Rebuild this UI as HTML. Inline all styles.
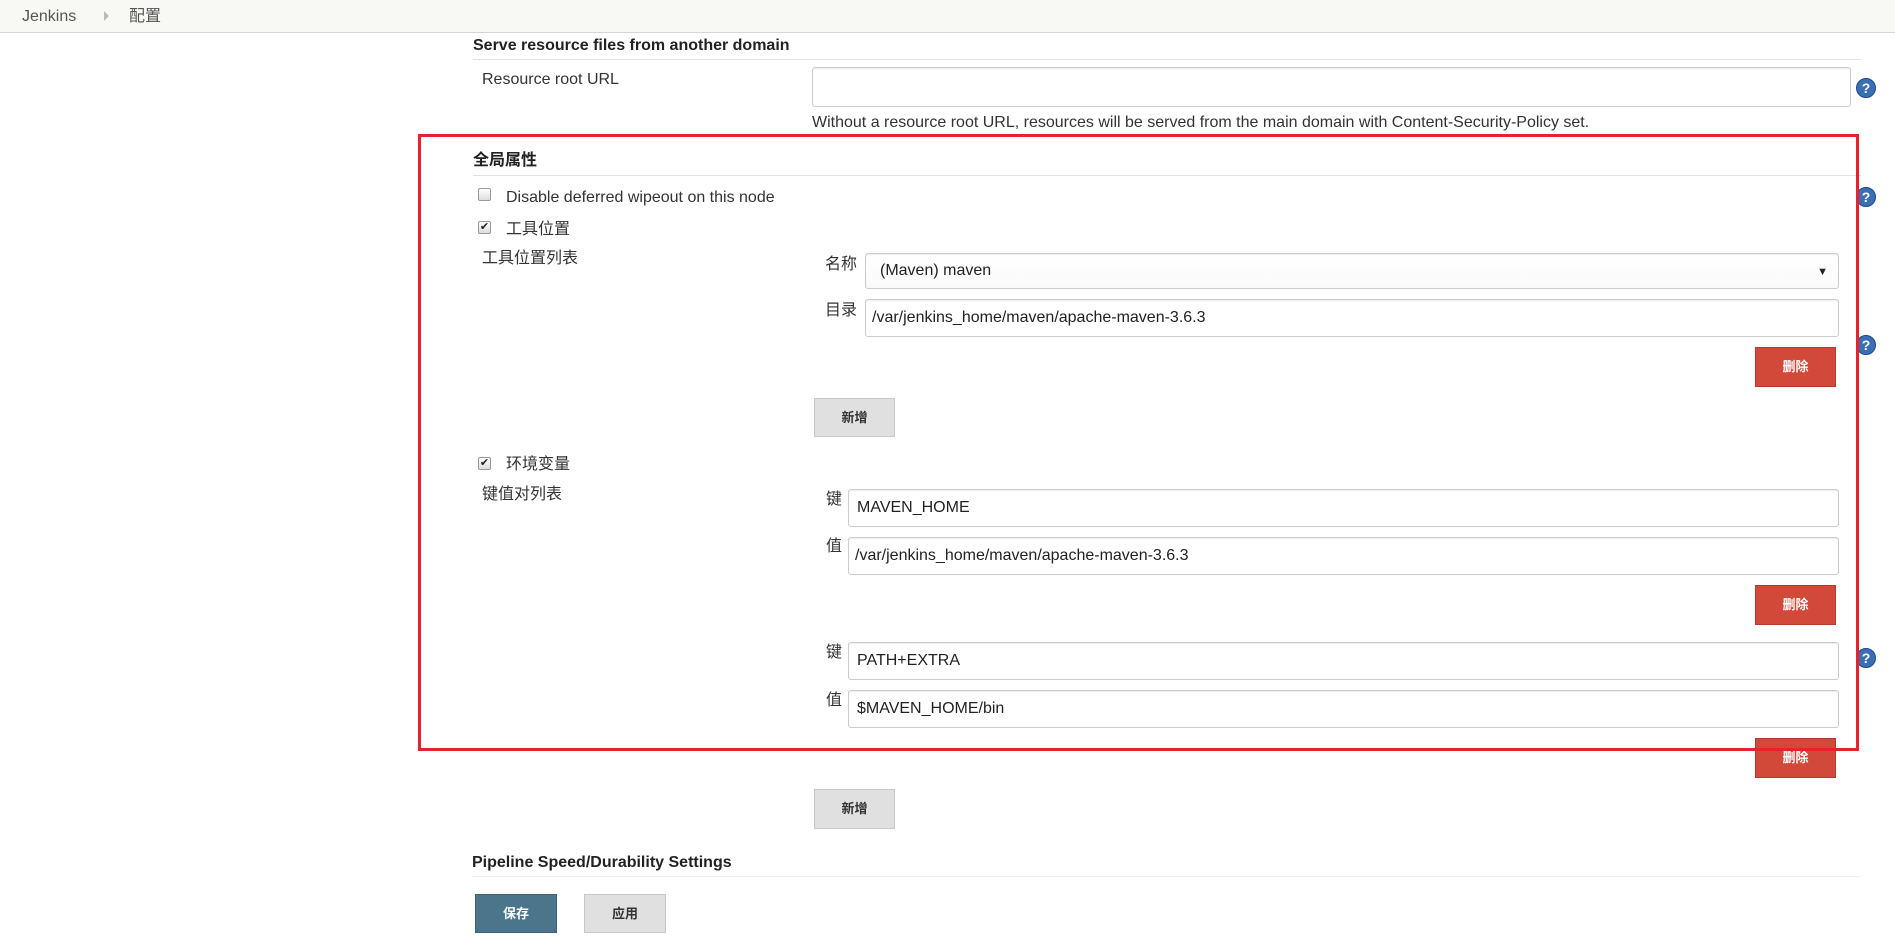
<!DOCTYPE html>
<html><head><meta charset="utf-8"><style>
*{box-sizing:border-box}
body{margin:0;width:1895px;height:941px;overflow:hidden;background:#fff;font-family:"Liberation Sans","Noto Sans CJK SC",sans-serif;font-size:16px;line-height:20px;color:#333;position:relative}
.a{position:absolute;white-space:nowrap}
.bar{left:0;top:0;width:1895px;height:33px;background:#f8f9f4;border-bottom:1px solid #d6d6d6}
.h{font-weight:bold;color:#222;font-size:16px}
.line{height:1px;background:#e2e2e2}
.inp{background:#fff;border:1px solid #ccc;border-radius:3px;box-shadow:inset 0 1px 1px rgba(0,0,0,.08);padding-left:8px;display:flex;align-items:center;color:#222;font-size:16px}
.help{width:20px;height:20px;border-radius:50%;background:#3a6fb4;border:1px solid #1d4b87;color:#fff;font-weight:bold;font-size:14px;text-align:center;line-height:18px}
.cb{width:13px;height:13px;border:1px solid #999;border-radius:2px;background:linear-gradient(#fff,#ddd);font-size:11px;line-height:11px;text-align:center;color:#222}
.del{background:#d24939;border:1px solid #b33a2c;color:#fff;font-weight:bold;font-size:13px;display:flex;align-items:center;justify-content:center;width:81px;height:40px}
.add{background:#e0e0e0;border:1px solid #c8c8c8;color:#333;font-weight:bold;font-size:13px;display:flex;align-items:center;justify-content:center;width:81px;height:39px}
.lbl{font-size:16px;color:#333}
</style></head><body>
<div class="a bar"></div>
<div class="a" style="left:22px;top:7px;color:#555">Jenkins</div>
<div class="a" style="left:104px;top:11px;width:0;height:0;border-left:5px solid #bbb;border-top:5px solid transparent;border-bottom:5px solid transparent"></div>
<div class="a" style="left:129px;top:7px;color:#555">配置</div>

<div class="a h" style="left:473px;top:36px">Serve resource files from another domain</div>
<div class="a line" style="left:473px;top:59px;width:1388px"></div>
<div class="a lbl" style="left:482px;top:70px">Resource root URL</div>
<div class="a inp" style="left:812px;top:67px;width:1039px;height:40px"></div>
<div class="a help" style="left:1856px;top:78px">?</div>
<div class="a lbl" style="left:812px;top:113px;color:#333">Without a resource root URL, resources will be served from the main domain with Content-Security-Policy set.</div>

<div class="a h" style="left:473px;top:151px">全局属性</div>
<div class="a line" style="left:473px;top:175px;width:1388px"></div>
<div class="a cb" style="left:478px;top:188px"></div>
<div class="a lbl" style="left:506px;top:188px">Disable deferred wipeout on this node</div>
<div class="a help" style="left:1856px;top:187px">?</div>
<div class="a cb" style="left:478px;top:221px">✔</div>
<div class="a lbl" style="left:506px;top:220px">工具位置</div>
<div class="a lbl" style="left:482px;top:249px">工具位置列表</div>

<div class="a lbl" style="left:825px;top:255px">名称</div>
<div class="a inp" style="left:865px;top:253px;width:974px;height:36px;padding-left:14px;background:linear-gradient(#fff,#fafafa)">(Maven) maven<span style="position:absolute;right:10px;top:8px;font-size:11px">▼</span></div>
<div class="a lbl" style="left:825px;top:301px">目录</div>
<div class="a inp" style="left:865px;top:299px;width:974px;height:38px;padding-left:6px">/var/jenkins_home/maven/apache-maven-3.6.3</div>
<div class="a help" style="left:1856px;top:335px">?</div>
<div class="a del" style="left:1755px;top:347px">删除</div>
<div class="a add" style="left:814px;top:398px">新增</div>

<div class="a cb" style="left:478px;top:457px">✔</div>
<div class="a lbl" style="left:506px;top:455px">环境变量</div>
<div class="a lbl" style="left:482px;top:485px">键值对列表</div>
<div class="a lbl" style="left:826px;top:490px">键</div>
<div class="a inp" style="left:848px;top:489px;width:991px;height:38px;padding-left:8px">MAVEN_HOME</div>
<div class="a lbl" style="left:826px;top:537px">值</div>
<div class="a inp" style="left:848px;top:537px;width:991px;height:38px;padding-left:6px">/var/jenkins_home/maven/apache-maven-3.6.3</div>
<div class="a del" style="left:1755px;top:585px">删除</div>
<div class="a lbl" style="left:826px;top:643px">键</div>
<div class="a inp" style="left:848px;top:642px;width:991px;height:38px;padding-left:8px">PATH+EXTRA</div>
<div class="a help" style="left:1856px;top:648px">?</div>
<div class="a lbl" style="left:826px;top:691px">值</div>
<div class="a inp" style="left:848px;top:690px;width:991px;height:38px;padding-left:8px">$MAVEN_HOME/bin</div>
<div class="a del" style="left:1755px;top:738px">删除</div>

<div class="a" style="left:418px;top:134px;width:1441px;height:617px;border:3px solid #e8222c"></div>

<div class="a add" style="left:814px;top:789px;height:40px">新增</div>
<div class="a h" style="left:472px;top:853px">Pipeline Speed/Durability Settings</div>
<div class="a line" style="left:472px;top:876px;width:1388px;background:#f0f0f0"></div>
<div class="a add" style="left:475px;top:894px;width:82px;height:39px;background:#4b758b;border-color:#3d6376;color:#fff">保存</div>
<div class="a add" style="left:584px;top:894px;width:82px;height:39px">应用</div>
</body></html>
